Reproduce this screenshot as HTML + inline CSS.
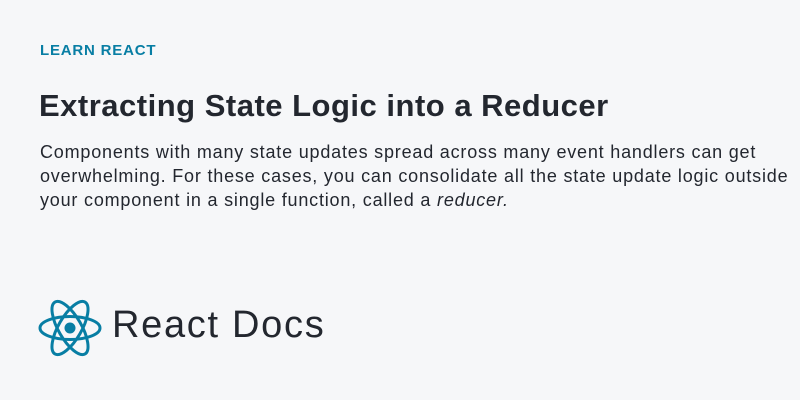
<!DOCTYPE html>
<html><head><meta charset="utf-8"><style>
html,body{margin:0;padding:0}
body{width:800px;height:400px;background:#f6f7f9;font-family:"Liberation Sans",sans-serif;color:#23272f;position:relative;overflow:hidden}
.k{position:absolute;left:40px;top:42px;font-size:15px;font-weight:bold;color:#087ea4;letter-spacing:0.8px}
.t{position:absolute;left:39px;top:88px;font-size:31px;font-weight:bold;white-space:nowrap;letter-spacing:0.5px}
.d{position:absolute;left:40px;top:140px;font-size:18px;line-height:24px;white-space:nowrap;letter-spacing:0.8px}
.l{position:absolute;left:112px;top:304px;font-size:38px;white-space:nowrap;letter-spacing:1.7px}
svg{position:absolute;left:37px;top:297px}
</style></head><body>
<div class="k">LEARN REACT</div>
<div class="t">Extracting State Logic into a Reducer</div>
<div class="d">Components with many state updates spread across many event handlers can get<br>overwhelming. For these cases, you can consolidate all the state update logic outside<br>your component in a single function, called a <i>reducer.</i></div>
<svg width="66" height="62" viewBox="-33 -31 66 62"><g fill="none" stroke="#087ea4" stroke-width="3"><ellipse rx="30" ry="11.5"/><ellipse rx="30" ry="11.5" transform="rotate(60)"/><ellipse rx="30" ry="11.5" transform="rotate(120)"/></g><circle r="5.5" fill="#087ea4"/></svg>
<div class="l">React Docs</div>
</body></html>
